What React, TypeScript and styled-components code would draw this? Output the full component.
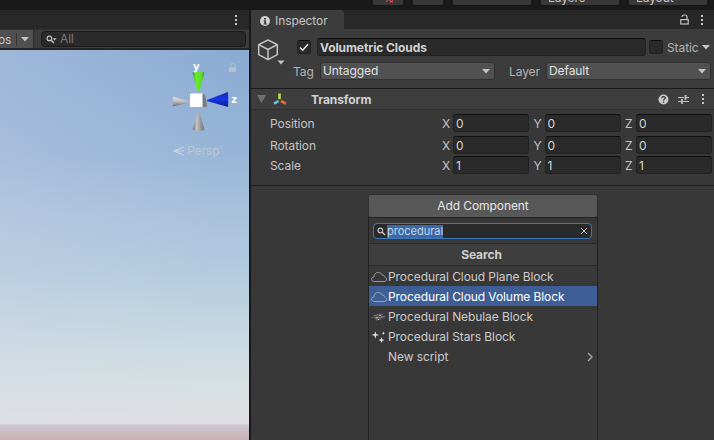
import React from "react";
import styled, { createGlobalStyle, css } from "styled-components";

const Global = createGlobalStyle`
  * { box-sizing: border-box; }
  body { margin: 0; background: #191919; }
`;

const Editor = styled.div`
  width: 714px;
  height: 440px;
  overflow: hidden;
  display: flex;
  flex-direction: column;
  background: #191919;
  color: #c4c4c4;
  font: 12px/16px Inter, "Liberation Sans", sans-serif;
  letter-spacing: -0.08px;
  white-space: nowrap;
`;

const MainToolbar = styled.div`
  height: 10px;
  flex: none;
  display: flex;
  align-items: flex-start;
  gap: 10px;
  padding-left: 373px;
`;

const ToolButton = styled.div<{ $w: number }>`
  width: ${(p) => p.$w}px;
  height: 5px;
  flex: none;
  overflow: hidden;
  display: flex;
  align-items: flex-end;
  padding: 0 0 2px 7px;
  border-radius: 0 0 2px 2px;
  background: #383838;
  line-height: 11px;
  svg { display: block; margin-left: 6px; }
`;

const Workspace = styled.div`
  flex: 1;
  display: flex;
  gap: 2px;
  min-height: 0;
`;

const ScenePanel = styled.section`
  width: 249px;
  flex: none;
  display: flex;
  flex-direction: column;
`;

const TabStrip = styled.div`
  height: 19px;
  flex: none;
  display: flex;
  align-items: center;
  justify-content: flex-end;
  background: #282828;
`;

const SceneToolbar = styled.div`
  height: 21px;
  flex: none;
  display: flex;
  align-items: center;
  background: #3c3c3c;
  border-bottom: 2px solid #232323;
  border-top: 1px solid #303030;
`;

const GizmosButton = styled.div`
  width: 34px;
  height: 18px;
  display: flex;
  align-items: center;
  background: #505050;
  border-right: 1px solid #2a2a2a;
  line-height: 18px;
  svg { margin-left: 4px; }
`;

const GizmosLabel = styled.span`
  width: 17px;
  height: 13px;
  line-height: 14px;
  border-right: 1px solid #333;
  text-indent: -2px;
`;

const SceneSearch = styled.div`
  width: 205px;
  height: 16px;
  margin-left: 7px;
  display: flex;
  align-items: center;
  padding-left: 4px;
  gap: 3px;
  border: 1px solid #1b1b1b;
  border-radius: 4px;
  background: #2a2a2a;
  color: #777;
`;

const Viewport = styled.div`
  flex: 1;
  position: relative;
  background:
    linear-gradient(to bottom, transparent 374px, #cdc7d2 375px, #c6b0b2 390px),
    linear-gradient(98deg, rgba(214,218,234,0.26), rgba(214,218,234,0) 80%),
    linear-gradient(to bottom, #8aabd3 0%, #98b5d7 27%, #a9c2dc 43%, #b3cbdf 57%, #c3d6e1 70%, #d5dfe2 84%, #dfe0e3 96%);
`;

const Gizmo = styled.svg`
  position: absolute;
  left: 170px;
  top: 10px;
`;

const Projection = styled.div`
  position: absolute;
  left: 173px;
  top: 93px;
  display: flex;
  align-items: center;
  gap: 2px;
  color: #bcc8d4;
`;

const InspectorPanel = styled.section`
  flex: 1;
  min-width: 0;
  display: flex;
  flex-direction: column;
  background: #383838;
`;

const InspectorTab = styled.div`
  width: 93px;
  height: 19px;
  margin-right: auto;
  padding: 2px 0 0 9px;
  display: flex;
  align-items: center;
  gap: 5px;
  border-radius: 3px 3px 0 0;
  background: #3c3c3c;
`;

const TabActions = styled.div<{ $right: number }>`
  display: flex;
  align-items: center;
  gap: 11px;
  padding-right: ${(p) => p.$right}px;
`;

const ObjectHeader = styled.div`
  height: 60px;
  flex: none;
  display: flex;
  background: #3c3c3c;
  border-bottom: 1px solid #1a1a1a;
`;

const ObjectIcon = styled.div`
  width: 42px;
  flex: none;
  padding: 9px 0 0 6px;
`;

const HeaderRows = styled.div`
  flex: 1;
  min-width: 0;
  padding-top: 9px;
  display: flex;
  flex-direction: column;
  gap: 6px;
`;

const HeaderRow = styled.div`
  height: 18px;
  display: flex;
  align-items: center;
  & > * { flex: none; }
`;

const inset = css`
  background: #2a2a2a;
  border: 1px solid #222;
  border-top-color: #0e0e0e;
  border-radius: 3px;
`;

const Checkbox = styled.div`
  ${inset}
  width: 14px;
  height: 14px;
  margin-left: 4px;
  display: flex;
  align-items: center;
  justify-content: center;
`;

const NameField = styled.div`
  ${inset}
  width: 329px;
  height: 18px;
  margin: 0 3px 0 6px;
  padding-left: 2px;
  line-height: 18px;
  font-weight: 700;
  color: #d2d2d2;
  & + ${Checkbox} { margin-left: 0; }
`;

const StaticLabel = styled.div`
  margin-left: 4px;
  display: flex;
  align-items: center;
  gap: 3px;
  padding-top: 1px;
  color: #b4b4b4;
`;

const FieldLabel = styled.div<{ $w: number }>`
  width: ${(p) => p.$w}px;
  padding-top: 2px;
  color: #b4b4b4;
`;

const Dropdown = styled.div<{ $w: number }>`
  width: ${(p) => p.$w}px;
  height: 18px;
  margin-right: 14px;
  padding: 0 4px 0 2px;
  display: flex;
  align-items: center;
  justify-content: space-between;
  border: 1px solid #303030;
  border-radius: 3px;
  background: #515151;
  color: #e0e0e0;
`;

const ComponentHeader = styled.div`
  height: 21px;
  flex: none;
  display: flex;
  align-items: center;
  padding: 0 9px 0 6px;
  background: #3e3e3e;
  border-bottom: 1px solid #303030;
`;

const AxesIcon = styled.svg`
  margin-left: 7px;
`;

const ComponentTitle = styled.div`
  margin: 1px auto 0 24px;
  font-weight: 700;
  color: #d2d2d2;
`;

const HeaderIcons = styled.div`
  display: flex;
  align-items: center;
  gap: 9px;
  & > :last-child { margin-left: 3px; }
`;

const TransformBody = styled.div`
  height: 76px;
  flex: none;
  padding-top: 4px;
  border-bottom: 1px solid #1f1f1f;
`;

const VectorRow = styled.div<{ $gap?: number }>`
  height: 18px;
  margin-bottom: ${(p) => p.$gap ?? 2}px;
  display: flex;
  align-items: center;
  padding-left: 19px;
  & > * { flex: none; }
`;

const VectorLabel = styled.div`
  width: 172px;
  padding-top: 1px;
`;

const AxisLabel = styled.div`
  width: 11px;
  padding-top: 1px;
`;

const NumberField = styled.div`
  ${inset}
  width: 76px;
  height: 18px;
  margin-right: 4.5px;
  padding-left: 2px;
  line-height: 18px;
  color: #d6d6d6;
  &:last-child { margin-right: 0; }
`;

const AddComponent = styled.div`
  width: 230px;
  margin: 8px 0 0 117px;
  flex: 1;
  display: flex;
  flex-direction: column;
  min-height: 0;
`;

const AddButton = styled.div`
  height: 24px;
  border: 1px solid #303030;
  border-radius: 3px;
  background: #585858;
  color: #e6e6e6;
  text-align: center;
  line-height: 22px;
`;

const Popup = styled.div`
  flex: 1;
  margin-top: -1px;
  border: 1px solid #222;
  border-bottom: 0;
  background: #383838;
`;

const PopupSearch = styled.div`
  height: 16px;
  margin: 5px 5px 4px 4px;
  padding: 0 3px;
  display: flex;
  align-items: center;
  border: 1px solid #3a79bb;
  border-radius: 4px;
  background: #2a2a2a;
`;

const SelectedText = styled.span`
  margin: 0 auto 0 1px;
  height: 13px;
  line-height: 13px;
  background: #3d6aa5;
  color: #c4d4e8;
  font-size: 11px;
  letter-spacing: 0;
`;

const PopupTitle = styled.div`
  height: 23px;
  border: solid #2a2a2a;
  border-width: 1px 0;
  background: #3e3e3e;
  text-align: center;
  font-weight: 700;
  line-height: 22px;
  padding-right: 3px;
  color: #d0d0d0;
`;

const ResultRow = styled.div<{ $active?: boolean }>`
  height: 20px;
  display: flex;
  align-items: center;
  padding: 1px 4px 0 2px;
  background: ${(p) => (p.$active ? "#3e5f96" : "transparent")};
  color: ${(p) => (p.$active ? "#fff" : "#cbcbcb")};
  svg { flex: none; }
`;

const ResultName = styled.span`
  margin: 0 auto 0 1px;
`;

const Caret = ({ color = "#c4c4c4", w = 8 }: { color?: string; w?: number }) => (
  <svg width={w} height={w / 2 + 1} viewBox="0 0 8 5"><path d="M0 0h8L4 4.600z" fill={color} /></svg>
);

const Kebab = () => (
  <svg width="4" height="12" viewBox="0 0 4 12" fill="#c4c4c4">
    <rect x="1" y="1" width="2" height="2" /><rect x="1" y="5" width="2" height="2" /><rect x="1" y="9" width="2" height="2" />
  </svg>
);

const Magnifier = ({ menu }: { menu?: boolean }) => (
  <svg width={menu ? 11 : 9} height="9" viewBox={menu ? "0 0 11 9" : "0 0 9 9"} fill="none" stroke="#c4c4c4">
    <circle cx="3.400" cy="3.400" r="2.300" strokeWidth="1.200" />
    <path d="M5.200 5.200 8 8" strokeWidth="1.500" />
    {menu && <path d="M6.500 3.300h4L8.500 5.400z" fill="#c4c4c4" stroke="none" />}
  </svg>
);

const Cloud = () => (
  <svg width="16" height="12" viewBox="0 0 16 12" fill="none" stroke="#aeb4bc" strokeWidth="0.8">
    <path d="M3.500 10.500C1.800 10.500.6 9.600.6 8.200c0-1.300 1-2.200 2.400-2.200C3 3.700 4.700 1.400 7.300 1.400c2 0 3.300 1.100 3.900 2.800 1.500-.3 2.600.6 2.700 2 1 .2 1.600 1 1.600 2 0 1.400-1 2.300-2.500 2.300z" />
  </svg>
);

const Nebula = () => (
  <svg width="16" height="12" viewBox="0 0 16 12" fill="none">
    <g transform="rotate(-4 8 6)">
      <path d="M.5 6.200h15" stroke="#777" strokeWidth=".8" strokeDasharray="2 1" />
      <ellipse cx="8" cy="6" rx="5" ry="3" fill="#777" fillOpacity=".4" />
      <path d="M2.500 4.500 7 3.500M8 7l5.500-1.500M4 7.500l3-.5M8 3.200l4 .4M5 9l4-1" stroke="#888" strokeWidth=".7" />
    </g>
    <path d="M5.500 6.500h1M8.500 4.500h1M7 8.500h1" stroke="#eee" />
  </svg>
);

const Stars = () => (
  <svg width="16" height="14" viewBox="0 0 16 14" fill="#e2e2e2">
    <path d="M4.300 1.200 5.200 4 8 4.900 5.200 5.800 4.300 8.700 3.400 5.800.6 4.900 3.400 4z" />
    <path d="m10.500 7.200.8 2.100 2.100.8-2.100.8-.8 2.200-.8-2.200-2.100-.8 2.100-.8z" />
    <path d="m12.300 1.600.5 1.100 1.200.5-1.200.5-.5 1.200-.5-1.200-1.200-.5 1.200-.5z" />
  </svg>
);

const Lock = () => (
  <svg width="9" height="11" viewBox="0 0 9 11" fill="none" stroke="#c4c4c4" strokeWidth="1.200">
    <rect x=".8" y="5.600" width="7.400" height="4.400" /><path d="M2 3V2.700A2 2 0 0 1 4 1h1a2 2 0 0 1 2 2v2.500" />
  </svg>
);

const SceneGizmo = () => (
  <Gizmo width="72" height="75" viewBox="170 60 72 75">
    <defs>
      <linearGradient id="green"><stop stopColor="#2f9f22" /><stop offset=".3" stopColor="#68ee27" /><stop offset=".75" stopColor="#5cdd24" /><stop offset="1" stopColor="#27881c" /></linearGradient>
      <linearGradient id="grey"><stop stopColor="#777" /><stop offset=".35" stopColor="#c2c2c2" /><stop offset="1" stopColor="#707070" /></linearGradient>
      <linearGradient id="side" x2="0" y2="1"><stop stopColor="#ddd" /><stop offset=".5" stopColor="#bebebe" /><stop offset="1" stopColor="#666" /></linearGradient>
      <linearGradient id="blue" x2="0" y2="1"><stop stopColor="#122ca0" /><stop offset=".45" stopColor="#1736e8" /><stop offset="1" stopColor="#0b1f92" /></linearGradient>
    </defs>
    <path d="M192.500 72.500q6-1 12 0l-5 18.500h-2z" fill="url(#green)" />
    <path d="M192.500 130q6 1.500 12 0l-5-18h-2z" fill="url(#grey)" />
    <path d="M173 96.500q-.4 5 0 10l16-4v-1z" fill="url(#side)" />
    <path d="M228 92q.5 7.500 0 15L207 101v-1z" fill="url(#blue)" />
    <path d="M190 94l2-1h12l-1 1z" fill="#d5dbe2" /><path d="M202 93.500l3 1 2 11v1.500h-5z" fill="#777c84" />
    <path d="M190 94h12.500v13H190z" fill="#fff" />
    <text x="193" y="70" fill="#fff" fontSize="11" fontWeight="700">y</text>
    <text x="231" y="102.500" fill="#fff" fontSize="11" fontWeight="700">z</text>
    <g fill="#b9c1cc"><path d="M229 67h7v5h-7z" /><path d="M230.500 65.500q0-2 2-2t2.500 2V67" fill="none" stroke="#b9c1cc" /></g>
  </Gizmo>
);

const results = [
  { name: "Procedural Cloud Plane Block", icon: <Cloud /> },
  { name: "Procedural Cloud Volume Block", icon: <Cloud />, active: true },
  { name: "Procedural Nebulae Block", icon: <Nebula /> },
  { name: "Procedural Stars Block", icon: <Stars /> },
];

const Vector = ({ label, value, gap }: { label: string; value: number; gap?: number }) => (
  <VectorRow $gap={gap}>
    <VectorLabel>{label}</VectorLabel>
    {["X", "Y", "Z"].map((axis) => (
      <React.Fragment key={axis}>
        <AxisLabel>{axis}</AxisLabel>
        <NumberField>{value}</NumberField>
      </React.Fragment>
    ))}
  </VectorRow>
);

export default function App() {
  return (
    <Editor>
      <Global />
      <MainToolbar>
        <ToolButton $w={30}>
          <svg width="8" height="3" viewBox="0 0 8 3"><path d="M1 0v2M3 0l4 2.500M7 0 4 2.500" stroke="#e65050" fill="none" /></svg>
        </ToolButton>
        <ToolButton $w={30} />
        <ToolButton $w={78} />
        <ToolButton $w={78}>Layers</ToolButton>
        <ToolButton $w={78}>Layout</ToolButton>
      </MainToolbar>
      <Workspace>
        <ScenePanel>
          <TabStrip><TabActions $right={11}><Kebab /></TabActions></TabStrip>
          <SceneToolbar>
            <GizmosButton><GizmosLabel>os</GizmosLabel><Caret /></GizmosButton>
            <SceneSearch><Magnifier menu />All</SceneSearch>
          </SceneToolbar>
          <Viewport>
            <SceneGizmo />
            <Projection>
              <svg width="12" height="10" viewBox="0 0 12 10" stroke="#c9d5e2" strokeWidth="1.100" fill="none"><path d="M11 1 1 5l10 4M1 5h10" /></svg>
              Persp
            </Projection>
          </Viewport>
        </ScenePanel>
        <InspectorPanel>
          <TabStrip>
            <InspectorTab>
              <svg width="10" height="10" viewBox="0 0 10 10"><circle cx="5" cy="5" r="5" fill="#d0d0d0" /><path d="M4 2h2v1.500H4zM3.600 4.200H6v3.200h.7v1H3.500v-1h.8V5.200h-.7z" fill="#3c3c3c" /></svg>
              Inspector
            </InspectorTab>
            <TabActions $right={10}><Lock /><Kebab /></TabActions>
          </TabStrip>
          <ObjectHeader>
            <ObjectIcon>
              <svg width="30" height="27" viewBox="0 0 30 27">
                <path d="m11 2 9.300 4.700v10L11 21.700l-9.300-5v-10zM1.700 6.700 11 11.500l9.300-4.800M11 11.500v10" fill="none" stroke="#c4c4c4" strokeWidth="1.500" strokeLinejoin="round" />
                <path d="M20.500 22.500h7l-3.500 4z" fill="#c4c4c4" />
              </svg>
            </ObjectIcon>
            <HeaderRows>
              <HeaderRow>
                <Checkbox><svg width="10" height="9" viewBox="0 0 10 9"><path d="m1 4.500 2.700 2.700L9 1.200" fill="none" stroke="#e8e8e8" strokeWidth="1.500" /></svg></Checkbox>
                <NameField>Volumetric Clouds</NameField>
                <Checkbox />
                <StaticLabel>Static<Caret w={8} /></StaticLabel>
              </HeaderRow>
              <HeaderRow>
                <FieldLabel $w={27}>Tag</FieldLabel>
                <Dropdown $w={175}>Untagged<Caret /></Dropdown>
                <FieldLabel $w={37}>Layer</FieldLabel>
                <Dropdown $w={165}>Default<Caret /></Dropdown>
              </HeaderRow>
            </HeaderRows>
          </ObjectHeader>
          <ComponentHeader>
            <svg width="9" height="8" viewBox="0 0 9 8"><path d="M0 0h9L4.500 8z" fill="#707070" /></svg>
            <AxesIcon width="14" height="13" viewBox="0 0 14 13" strokeWidth="2.600">
              <path d="M6.500 6.200V.5" stroke="#b5e348" /><path d="M5.500 8 1 10.700" stroke="#6ebde9" /><path d="m8 8 4.700 2.700" stroke="#e96b47" />
            </AxesIcon>
            <ComponentTitle>Transform</ComponentTitle>
            <HeaderIcons>
              <svg width="11" height="11" viewBox="0 0 11 11"><circle cx="5.500" cy="5.500" r="5" fill="#c8c8c8" /><path d="M3.700 4.200c0-1 .7-1.600 1.800-1.600 2.200 0 2.300 2 .8 2.700-.6.300-.8.500-.8 1.100M5.500 7.400v1.300" fill="none" stroke="#333" strokeWidth="1.200" /></svg>
              <svg width="11" height="10" viewBox="0 0 11 10" stroke="#c4c4c4" fill="none"><path d="M0 3.500h6M8 3.500h3M0 7.500h3M5 7.500h6" /><path d="M7.500 1v5M4 5v5" strokeWidth="1.800" /></svg>
              <Kebab />
            </HeaderIcons>
          </ComponentHeader>
          <TransformBody>
            <Vector label="Position" value={0} gap={4} />
            <Vector label="Rotation" value={0} />
            <Vector label="Scale" value={1} />
          </TransformBody>
          <AddComponent>
            <AddButton>Add Component</AddButton>
            <Popup>
              <PopupSearch>
                <Magnifier />
                <SelectedText>procedural</SelectedText>
                <svg width="8" height="8" viewBox="0 0 8 8" stroke="#c4c4c4"><path d="m1 1 6 6M7 1 1 7" /></svg>
              </PopupSearch>
              <PopupTitle>Search</PopupTitle>
              {results.map((r) => (
                <ResultRow key={r.name} $active={r.active}>{r.icon}<ResultName>{r.name}</ResultName></ResultRow>
              ))}
              <ResultRow>
                <svg width="16" height="12" />
                <ResultName>New script</ResultName>
                <svg width="6" height="10" viewBox="0 0 6 10" fill="none" stroke="#aaa" strokeWidth="1.300"><path d="m1 1 4 4-4 4" /></svg>
              </ResultRow>
            </Popup>
          </AddComponent>
        </InspectorPanel>
      </Workspace>
    </Editor>
  );
}
